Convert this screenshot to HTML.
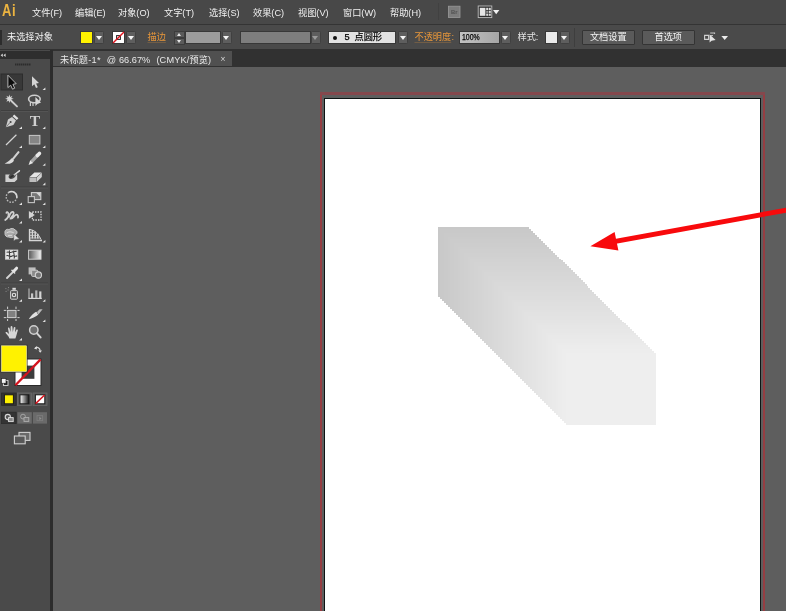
<!DOCTYPE html>
<html lang="zh-CN">
<head>
<meta charset="utf-8">
<title>未标题-1* @ 66.67% (CMYK/预览)</title>
<style>
html,body{margin:0;padding:0;}
body{width:786px;height:611px;overflow:hidden;position:relative;background:#5e5e5e;
  font-family:"Liberation Sans","Noto Sans CJK SC",sans-serif;font-size:9.2px;color:#e4e4e4;}
.abs{position:absolute;}
#menubar{left:0;top:0;width:786px;height:24px;will-change:transform;}
#menubg{left:0;top:0;width:786px;height:24px;background:#484848;}
#menubar .mi{position:absolute;top:0.5px;height:24px;line-height:24px;font-size:9.2px;color:#f0f0f0;white-space:nowrap;}
#ctrl{left:0;top:24px;width:786px;height:26px;border-top:1px solid transparent;box-sizing:border-box;will-change:transform;}
#ctrlbg{left:0;top:24px;width:786px;height:26px;background:#4a4a4a;border-top:1px solid #343434;box-sizing:border-box;}
#ctrl .t{position:absolute;top:0.4px;height:25px;line-height:25px;font-size:9.2px;white-space:nowrap;}
.dd{position:absolute;top:6px;height:13px;width:10px;background:#5e5e5e;border:1px solid #404040;box-sizing:border-box;border-radius:1.5px;}
.dd.dim:after{border-top-color:#9a9a9a;}
.sp{position:absolute;width:10.5px;height:6.5px;background:#5a5a5a;border:1px solid #3c3c3c;box-sizing:border-box;}
.sp:after{content:"";position:absolute;left:1.8px;top:0.6px;border-left:2.5px solid transparent;border-right:2.5px solid transparent;border-bottom:3px solid #e8e8e8;}
.sp.dn:after{border-bottom:none;border-top:3px solid #e8e8e8;top:1px;}
.lnk{text-decoration:underline;text-decoration-thickness:1px;text-decoration-color:rgba(232,151,58,0.25);text-underline-offset:1.5px;}
.dd:after{content:"";position:absolute;left:0.9px;top:3.8px;border-left:3.1px solid transparent;border-right:3.1px solid transparent;border-top:4px solid #f4f4f4;}
.fld{position:absolute;top:6px;height:13px;box-sizing:border-box;border:1px solid #383838;}
.btn{position:absolute;top:5px;height:14.5px;box-sizing:border-box;border:1px solid #343434;background:#5a5a5a;color:#f4f4f4;font-size:9.2px;line-height:12.5px;text-align:center;border-radius:1px;}
#tabbar{left:0;top:49.4px;width:786px;height:17.4px;background:#313131;}
#tabbg{left:53px;top:51px;width:179px;height:15px;background:#505050;}
#tab{left:53px;top:51px;width:179px;height:15px;will-change:transform;font-size:9.2px;line-height:18px;color:#e8e8e8;white-space:nowrap;}
#tools{left:0;top:50px;width:50px;height:561px;background:#4a4a4a;}
#toolsborder{left:49.5px;top:50px;width:3.5px;height:561px;background:#2c2c2c;}
#toolshead{left:0;top:51px;width:50px;height:8px;background:#2e2e2e;}
.tt{position:absolute;top:0;}
.sep{position:absolute;left:2px;width:46px;height:1px;background:#484848;}
</style>
</head>
<body>
<!-- canvas -->
<div class="abs" id="canvas" style="left:53px;top:67px;width:733px;height:544px;background:#5e5e5e;"></div>
<!-- bleed (red) -->
<div class="abs" style="left:320px;top:93px;width:445px;height:530px;border:2px solid #963e43;border-top:none;box-sizing:border-box;"></div>
<div class="abs" style="left:320px;top:92px;width:445px;height:3px;background:#84484d;"></div>
<!-- artboard -->
<div class="abs" style="left:324px;top:98px;width:437px;height:530px;border:1px solid #0e1414;background:#fff;box-sizing:border-box;"></div>
<svg class="abs" style="left:0;top:0" width="786" height="611" viewBox="0 0 786 611">
  <defs>
    <linearGradient id="g1" gradientUnits="userSpaceOnUse" x1="438" y1="227" x2="655" y2="424">
      <stop offset="0" stop-color="#cfcfcf"/><stop offset="1" stop-color="#f0f0f0"/>
    </linearGradient>
  </defs>
  <g shape-rendering="crispEdges">
<rect x="438.40" y="227.00" width="90.60" height="69.60" fill="#c8c8c8"/>
<rect x="440.39" y="228.97" width="90.59" height="69.64" fill="#c9c9c9"/>
<rect x="442.39" y="230.94" width="90.58" height="69.67" fill="#c9c9c9"/>
<rect x="444.38" y="232.91" width="90.57" height="69.71" fill="#cacaca"/>
<rect x="446.38" y="234.88" width="90.56" height="69.74" fill="#cacaca"/>
<rect x="448.37" y="236.84" width="90.55" height="69.78" fill="#cbcbcb"/>
<rect x="450.36" y="238.81" width="90.53" height="69.82" fill="#cccccc"/>
<rect x="452.36" y="240.78" width="90.52" height="69.85" fill="#cccccc"/>
<rect x="454.35" y="242.75" width="90.51" height="69.89" fill="#cdcdcd"/>
<rect x="456.34" y="244.72" width="90.50" height="69.92" fill="#cdcdcd"/>
<rect x="458.34" y="246.69" width="90.49" height="69.96" fill="#cecece"/>
<rect x="460.33" y="248.66" width="90.48" height="70.00" fill="#cfcfcf"/>
<rect x="462.32" y="250.62" width="90.47" height="70.03" fill="#cfcfcf"/>
<rect x="464.32" y="252.59" width="90.46" height="70.07" fill="#d0d0d0"/>
<rect x="466.31" y="254.56" width="90.45" height="70.10" fill="#d0d0d0"/>
<rect x="468.31" y="256.53" width="90.44" height="70.14" fill="#d1d1d1"/>
<rect x="470.30" y="258.50" width="90.42" height="70.17" fill="#d2d2d2"/>
<rect x="472.29" y="260.47" width="90.41" height="70.21" fill="#d2d2d2"/>
<rect x="474.29" y="262.44" width="90.40" height="70.25" fill="#d3d3d3"/>
<rect x="476.28" y="264.41" width="90.39" height="70.28" fill="#d3d3d3"/>
<rect x="478.27" y="266.38" width="90.38" height="70.32" fill="#d4d4d4"/>
<rect x="480.27" y="268.34" width="90.37" height="70.35" fill="#d4d4d4"/>
<rect x="482.26" y="270.31" width="90.36" height="70.39" fill="#d5d5d5"/>
<rect x="484.26" y="272.28" width="90.35" height="70.43" fill="#d6d6d6"/>
<rect x="486.25" y="274.25" width="90.34" height="70.46" fill="#d6d6d6"/>
<rect x="488.24" y="276.22" width="90.33" height="70.50" fill="#d7d7d7"/>
<rect x="490.24" y="278.19" width="90.32" height="70.53" fill="#d7d7d7"/>
<rect x="492.23" y="280.16" width="90.30" height="70.57" fill="#d8d8d8"/>
<rect x="494.22" y="282.12" width="90.29" height="70.61" fill="#d9d9d9"/>
<rect x="496.22" y="284.09" width="90.28" height="70.64" fill="#d9d9d9"/>
<rect x="498.21" y="286.06" width="90.27" height="70.68" fill="#dadada"/>
<rect x="500.21" y="288.03" width="90.26" height="70.71" fill="#dadada"/>
<rect x="502.20" y="290.00" width="90.25" height="70.75" fill="#dbdbdb"/>
<rect x="504.19" y="291.97" width="90.24" height="70.79" fill="#dcdcdc"/>
<rect x="506.19" y="293.94" width="90.23" height="70.82" fill="#dcdcdc"/>
<rect x="508.18" y="295.91" width="90.22" height="70.86" fill="#dddddd"/>
<rect x="510.17" y="297.88" width="90.21" height="70.89" fill="#dddddd"/>
<rect x="512.17" y="299.84" width="90.20" height="70.93" fill="#dedede"/>
<rect x="514.16" y="301.81" width="90.18" height="70.97" fill="#dfdfdf"/>
<rect x="516.16" y="303.78" width="90.17" height="71.00" fill="#dfdfdf"/>
<rect x="518.15" y="305.75" width="90.16" height="71.04" fill="#e0e0e0"/>
<rect x="520.14" y="307.72" width="90.15" height="71.07" fill="#e0e0e0"/>
<rect x="522.14" y="309.69" width="90.14" height="71.11" fill="#e1e1e1"/>
<rect x="524.13" y="311.66" width="90.13" height="71.15" fill="#e2e2e2"/>
<rect x="526.12" y="313.62" width="90.12" height="71.18" fill="#e2e2e2"/>
<rect x="528.12" y="315.59" width="90.11" height="71.22" fill="#e3e3e3"/>
<rect x="530.11" y="317.56" width="90.10" height="71.25" fill="#e3e3e3"/>
<rect x="532.11" y="319.53" width="90.09" height="71.29" fill="#e4e4e4"/>
<rect x="534.10" y="321.50" width="90.08" height="71.33" fill="#e4e4e4"/>
<rect x="536.09" y="323.47" width="90.06" height="71.36" fill="#e5e5e5"/>
<rect x="538.09" y="325.44" width="90.05" height="71.40" fill="#e6e6e6"/>
<rect x="540.08" y="327.41" width="90.04" height="71.43" fill="#e6e6e6"/>
<rect x="542.08" y="329.38" width="90.03" height="71.47" fill="#e7e7e7"/>
<rect x="544.07" y="331.34" width="90.02" height="71.50" fill="#e7e7e7"/>
<rect x="546.06" y="333.31" width="90.01" height="71.54" fill="#e8e8e8"/>
<rect x="548.06" y="335.28" width="90.00" height="71.58" fill="#e9e9e9"/>
<rect x="550.05" y="337.25" width="89.99" height="71.61" fill="#e9e9e9"/>
<rect x="552.04" y="339.22" width="89.98" height="71.65" fill="#eaeaea"/>
<rect x="554.04" y="341.19" width="89.97" height="71.68" fill="#eaeaea"/>
<rect x="556.03" y="343.16" width="89.95" height="71.72" fill="#ebebeb"/>
<rect x="558.02" y="345.12" width="89.94" height="71.76" fill="#ececec"/>
<rect x="560.02" y="347.09" width="89.93" height="71.79" fill="#ececec"/>
<rect x="562.01" y="349.06" width="89.92" height="71.83" fill="#ededed"/>
<rect x="564.01" y="351.03" width="89.91" height="71.86" fill="#ededed"/>
<rect x="566.00" y="353.00" width="89.90" height="71.90" fill="#eeeeee"/>
  </g>
  <polygon points="790,206.9 790,211.9 616,243.8 616,238.8" fill="#f80a0c"/>
  <polygon points="590.4,246.2 614.6,232 618.4,250.6" fill="#f80a0c"/>
</svg>

<div class="abs" id="menubg"></div>
<div class="abs" id="ctrlbg"></div>
<div class="abs" id="menubar">
  <div class="mi" style="left:2px;top:-0.5px;font-weight:bold;font-size:16.6px;color:#ecb440;line-height:22px;transform:scaleX(0.78);transform-origin:0 0;letter-spacing:0.8px;">Ai</div>
  <div class="mi" style="left:32px;">文件(F)</div>
  <div class="mi" style="left:75px;">编辑(E)</div>
  <div class="mi" style="left:118px;">对象(O)</div>
  <div class="mi" style="left:164px;">文字(T)</div>
  <div class="mi" style="left:209px;">选择(S)</div>
  <div class="mi" style="left:253px;">效果(C)</div>
  <div class="mi" style="left:298px;">视图(V)</div>
  <div class="mi" style="left:343px;">窗口(W)</div>
  <div class="mi" style="left:390px;">帮助(H)</div>
  <div class="abs" style="left:438px;top:3px;width:1px;height:17px;background:#414141;"></div>
  <svg class="abs" style="left:446px;top:4px" width="56" height="16" viewBox="446 4 56 16">
    <rect x="448.4" y="6.2" width="11.6" height="11.2" fill="#7c7c7c" stroke="#9a9a9a" stroke-width="0.8"/>
    <text x="454.2" y="14.2" font-family="'Liberation Sans',sans-serif" font-weight="bold" font-size="5.8" fill="#505050" text-anchor="middle">Br</text>
    <rect x="478.2" y="6" width="13.6" height="11.6" fill="#2e2e2e" stroke="#bdbdbd" stroke-width="0.9"/>
    <rect x="479.8" y="7.8" width="5.6" height="8" fill="#e6e6e6"/>
    <rect x="486.2" y="7.8" width="2" height="2.2" fill="#dcdcdc"/><rect x="488.8" y="7.8" width="2" height="2.2" fill="#dcdcdc"/>
    <rect x="486.2" y="10.7" width="2" height="2.2" fill="#9a9a9a"/><rect x="488.8" y="10.7" width="2" height="2.2" fill="#dcdcdc"/>
    <rect x="486.2" y="13.6" width="2" height="2.2" fill="#dcdcdc"/><rect x="488.8" y="13.6" width="2" height="2.2" fill="#dcdcdc"/>
    <path d="M493 10 H499.4 L496.2 14.2 Z" fill="#f0f0f0"/>
  </svg>
</div>

<div class="abs" id="ctrl">
  <div class="abs" style="left:0;top:5px;width:2px;height:14.5px;background:#2c2c2c;"></div>
  <div class="t" style="left:7px;color:#f2f2f2;">未选择对象</div>
  <div class="fld" style="left:80px;width:13px;background:#fff200;border-color:#3a3a3a;"></div>
  <div class="dd" style="left:94px;"></div>
  <div class="fld" style="left:112px;width:13px;background:#fff;"></div>
  <svg class="abs" style="left:112px;top:6px" width="13" height="13" viewBox="0 0 13 13"><rect x="4.6" y="4.6" width="3.8" height="3.8" fill="none" stroke="#222" stroke-width="1"/><line x1="1" y1="12" x2="12" y2="1" stroke="#e0141e" stroke-width="1.5"/></svg>
  <div class="dd" style="left:126px;"></div>
  <div class="t lnk" style="left:147.5px;color:#e8973a;">描边</div>
  <div class="sp" style="left:174px;top:6px;"></div>
  <div class="sp dn" style="left:174px;top:13px;"></div>
  <div class="fld" style="left:185px;width:36px;background:#9c9c9c;"></div>
  <div class="dd" style="left:221.5px;"></div>
  <div class="fld" style="left:239.5px;width:71px;background:#7e7e7e;"></div>
  <div class="dd dim" style="left:310.5px;"></div>
  <div class="fld" style="left:328px;width:68px;background:#e2e2e2;"></div>
  <div class="abs" style="left:333px;top:11px;width:4px;height:4px;border-radius:2px;background:#111;"></div>
  <div class="t" style="left:344.5px;color:#000;-webkit-text-stroke:0.25px #000;">5</div>
  <div class="t" style="left:354.5px;color:#000;-webkit-text-stroke:0.2px #000;">点圆形</div>
  <div class="dd" style="left:398px;"></div>
  <div class="t lnk" style="left:414.5px;color:#e8973a;">不透明度</div>
  <div class="t" style="left:451.5px;color:#e8973a;">:</div>
  <div class="fld" style="left:459px;width:41px;background:linear-gradient(90deg,#c2c2c2,#a6a6a6);"></div>
  <div class="t" style="left:462.4px;top:-0.8px;color:#000;font-size:9.4px;-webkit-text-stroke:0.25px #000;transform:scaleX(0.74);transform-origin:0 50%;">100%</div>
  <div class="dd" style="left:500.6px;"></div>
  <div class="t" style="left:517.5px;">样式:</div>
  <div class="fld" style="left:545px;width:13px;background:#ebebeb;"></div>
  <div class="dd" style="left:559.5px;"></div>
  <div class="abs" style="left:574px;top:3px;width:1px;height:19px;background:#3e3e3e;"></div>
  <div class="btn" style="left:581.5px;width:53.5px;">文档设置</div>
  <div class="btn" style="left:641.5px;width:53.5px;">首选项</div>
  <svg class="abs" style="left:702px;top:4px" width="30" height="18" viewBox="0 0 30 18">
    <path d="M2.6 6.4 H6.6 V10.4 H2.6 Z" fill="none" stroke="#d0d0d0" stroke-width="1.1"/>
    <path d="M8.2 4 H12 M8.2 6.6 H11 M12.6 3.4 V5" stroke="#c8c8c8" stroke-width="1"/>
    <path d="M7.6 5.6 V13.6 L9.6 11.8 L13.6 11 Z" fill="#e4e4e4"/>
    <path d="M19.4 7 H26 L22.7 11 Z" fill="#ececec"/>
  </svg>
</div>

<div class="abs" id="tabbar"></div>
<div class="abs" id="tabbg"></div>
<div class="abs" id="tab"><span class="tt" style="left:7px;letter-spacing:0.25px;">未标题-1*</span><span class="tt" style="left:53.8px;">@</span><span class="tt" style="left:66px;">66.67%</span><span class="tt" style="left:103.4px;letter-spacing:0.15px;">(CMYK/预览)</span><span style="position:absolute;left:167.6px;top:-0.6px;font-size:8.4px;color:#dcdcdc;">×</span></div>

<div class="abs" id="tools"></div>
<div class="abs" id="toolsborder"></div>
<div class="abs" id="toolshead"></div>
<svg class="abs" id="toolsvg" style="left:0;top:0;will-change:transform;filter:blur(0.3px)" width="53" height="611" viewBox="0 0 53 611">
  <defs>
    <linearGradient id="tg1" x1="0" y1="0" x2="1" y2="0"><stop offset="0" stop-color="#555"/><stop offset="1" stop-color="#f4f4f4"/></linearGradient>
    <linearGradient id="tg2" x1="0" y1="0" x2="1" y2="0"><stop offset="0" stop-color="#fff"/><stop offset="1" stop-color="#111"/></linearGradient>
  </defs>
  <!-- header arrows -->
  <path d="M0.6 55.2 L2.8 53.4 V57Z M3.4 55.2 L5.6 53.4 V57Z" fill="#d4d4d4"/>
  <!-- gripper -->
  <line x1="15" y1="64.5" x2="31" y2="64.5" stroke="#2c2c2c" stroke-width="2" stroke-dasharray="1.5 0.5"/>
  <!-- separators -->
  <g stroke="#3f3f3f" stroke-width="1">
    <line x1="1" y1="110.5" x2="48" y2="110.5"/><line x1="1" y1="187" x2="48" y2="187"/><line x1="1" y1="283" x2="48" y2="283"/>
  </g>
  <g stroke="#545454" stroke-width="1">
    <line x1="1" y1="111.5" x2="48" y2="111.5"/><line x1="1" y1="188" x2="48" y2="188"/><line x1="1" y1="284" x2="48" y2="284"/>
  </g>
  <!-- selection highlight -->
  <rect x="1" y="74" width="21.5" height="16" fill="#383838" stroke="#2c2c2c" stroke-width="1"/>
  <!-- selection tool (black arrow white outline) -->
  <path d="M7.9 75.2 V87.6 L10.7 85.2 L12.5 89.2 L14.7 88.2 L12.9 84.3 L16.2 83.7 Z" fill="#0c0c0c" stroke="#c4c4c4" stroke-width="0.9" stroke-linejoin="round"/>
  <!-- direct selection -->
  <path d="M32 76.3 V86.2 L34.3 84.2 L36 88 L37.8 87.2 L36.1 83.4 L39 83 Z" fill="#d4d4d4"/>
  <!-- flyout triangles -->
  <g fill="#e2e2e2">
    <path d="M45.4 87.6 V90 H42.6Z"/>
    <path d="M22 126.4 V129 H19Z"/><path d="M45.4 126.4 V129 H42.6Z"/>
    <path d="M22 145.4 V148 H19Z"/><path d="M45.4 145.4 V148 H42.6Z"/>
    <path d="M45.4 163.2 V165.8 H42.6Z"/>
    <path d="M45.4 182.6 V185.2 H42.6Z"/>
    <path d="M22 202.4 V205 H19Z"/><path d="M45.4 202.4 V205 H42.6Z"/>
    <path d="M22 221 V223.6 H19Z"/>
    <path d="M22 240 V242.6 H19Z"/><path d="M45.4 240 V242.6 H42.6Z"/>
    <path d="M22 278.4 V281 H19Z"/>
    <path d="M22 299.2 V301.8 H19Z"/><path d="M45.4 299.2 V301.8 H42.6Z"/>
    <path d="M45.4 319.4 V322 H42.6Z"/>
    <path d="M22 338 V340.6 H19Z"/>
  </g>
  <!-- magic wand -->
  <line x1="11.4" y1="101" x2="17" y2="106.4" stroke="#cdcdcd" stroke-width="1.9" stroke-linecap="round"/>
  <polygon points="9.40,94.50 10.17,96.95 12.44,95.76 11.25,98.03 13.70,98.80 11.25,99.57 12.44,101.84 10.17,100.65 9.40,103.10 8.63,100.65 6.36,101.84 7.55,99.57 5.10,98.80 7.55,98.03 6.36,95.76 8.63,96.95" fill="#d4d4d4"/>
  <!-- lasso -->
  <ellipse cx="34.4" cy="99" rx="5.8" ry="3.8" fill="none" stroke="#cfcfcf" stroke-width="1.6"/>
  <path d="M30.4 102 V106 M33 102.6 V106" stroke="#cfcfcf" stroke-width="1.2"/>
  <path d="M35.4 97 V106 L37.4 104 L41 102.6 Z" fill="#d8d8d8"/>
  <!-- pen -->
  <g>
    <path d="M14.2 114.4 L18.4 118.2 L16.8 120 L12.6 116.2 Z" fill="#e0e0e0"/>
    <path d="M12 117 L16 120.6 L13.4 125 L5.8 127.2 L8 119.6 Z" fill="#cfcfcf"/>
    <circle cx="10.6" cy="122" r="1" fill="#444"/>
    <line x1="6.4" y1="126.6" x2="10" y2="122.6" stroke="#555" stroke-width="0.7"/>
  </g>
  <!-- T -->
  <text x="35" y="126.2" font-family="'Liberation Serif',serif" font-size="15.5" font-weight="bold" fill="#cfcfcf" text-anchor="middle">T</text>
  <!-- line -->
  <line x1="6" y1="145" x2="16.4" y2="134.8" stroke="#d4d4d4" stroke-width="1.2"/>
  <!-- rect -->
  <rect x="29.3" y="135.4" width="10.6" height="8.6" fill="#858585" stroke="#c8c8c8" stroke-width="1"/>
  <!-- brush -->
  <line x1="18.5" y1="152.2" x2="12.8" y2="159.2" stroke="#d2d2d2" stroke-width="2.1" stroke-linecap="round"/>
  <path d="M11.6 158.2 L14 160.4 C12.6 163.4 8.4 164.6 4.6 163.4 C7.6 162.4 9.4 160.6 11.6 158.2Z" fill="#dadada"/>
  <!-- pencil -->
  <g>
    <line x1="38.2" y1="154.6" x2="31.6" y2="161.6" stroke="#a6a6a6" stroke-width="3.5"/>
    <line x1="39.4" y1="153.4" x2="37.4" y2="155.5" stroke="#e8e8e8" stroke-width="3.6" stroke-linecap="round"/>
    <path d="M30.2 160.2 L33.2 163 L28.6 165 Z" fill="#e6e6e6"/>
  </g>
  <!-- blob brush -->
  <g>
    <path d="M5.4 174.6 H10 C8 176 8 178.6 11 179 C14 179 15.6 177 16 174.6 H17.2 V179.4 L14.6 182 H5.4 Z" fill="#cfcfcf"/>
    <line x1="19.4" y1="170.8" x2="14" y2="175" stroke="#dcdcdc" stroke-width="1.5" stroke-linecap="round"/>
    <path d="M14.6 174.4 C13 177.4 10.4 178 9.4 177.6 C10.6 175.6 12.6 174.8 14.6 174.4Z" fill="#2c2c2c"/>
  </g>
  <!-- eraser -->
  <g>
    <path d="M34.4 172.4 H41.6 L36.6 177 H29.6 Z" fill="#e4e4e4"/>
    <path d="M29.4 177.4 H36.6 V182 H29.4 Z" fill="#bdbdbd"/>
    <path d="M37 177.2 L41.8 172.8 V177 L37 181.8 Z" fill="#d2d2d2"/>
  </g>
  <!-- rotate -->
  <circle cx="11.5" cy="197" r="5.3" fill="none" stroke="#bcbcbc" stroke-width="1.3" stroke-dasharray="1.6 1.3"/>
  <path d="M8.6 192.4 A5.4 5.4 0 0 1 16.8 197.8" fill="none" stroke="#d8d8d8" stroke-width="1.5"/>
  <!-- scale -->
  <rect x="31.4" y="192.6" width="9.4" height="7" fill="#777" stroke="#d0d0d0" stroke-width="1.1"/>
  <path d="M36.4 193 H40.4 V197 Z" fill="#d8d8d8"/>
  <rect x="28.2" y="196.6" width="6.2" height="6" fill="#4a4a4a" stroke="#c4c4c4" stroke-width="1.1"/>
  <!-- warp -->
  <path d="M5.2 220 C8 218 9 216 8.4 213.6 C8 211.6 6.6 211.6 6.4 212.8 M9 217 C10 213 12.6 210.4 13.6 212.6 C14.4 214.6 11.6 216.6 10.6 218.6 C13 219 14 215.6 16 214.8 C17.6 214.4 18.4 216 18 217.6" fill="none" stroke="#d0d0d0" stroke-width="1.7" stroke-linecap="round"/>
  <!-- free transform -->
  <rect x="32.4" y="212" width="8.6" height="8" fill="#484848" stroke="#dcdcdc" stroke-width="1.3" stroke-dasharray="1.4 1.2"/>
  <path d="M28.9 211 V218.8 L34.8 215 Z" fill="#d4d4d4"/>
  <!-- shape builder -->
  <path d="M5 233 C4.4 230 7 228.6 9 229.6 C10.6 228 14 228 15 230 C17.4 230.6 17.8 233.6 15.6 234.6 C15 237.4 11 238.4 9 237 C6.4 237.4 4.6 235.4 5 233Z" fill="#a8a8a8" stroke="#cfcfcf" stroke-width="0.9"/>
  <path d="M6.6 233 C8 231.4 12 231.4 14 233.2 M8 235.4 H12" stroke="#e4e4e4" stroke-width="0.8" fill="none"/>
  <path d="M13.8 233.8 V241 L15.6 239.4 L19.4 239 Z" fill="#dedede" stroke="#505050" stroke-width="0.4"/>
  <!-- perspective grid -->
  <g stroke="#d6d6d6" fill="none">
    <path d="M29.6 229 V240.4 H42" stroke-width="1.5"/>
    <path d="M29.6 229.4 C34 230 38 233 41 239.6" stroke-width="1"/>
    <path d="M32.4 230 V238.4 M35.2 231.4 V238.4 M37.8 233.8 V238.4" stroke-width="1.5"/>
    <path d="M29.6 232.4 H35.4 M29.6 235.4 H38.6 M29.6 238 H40.4" stroke-width="0.8"/>
  </g>
  <!-- mesh -->
  <rect x="5.4" y="250" width="12.4" height="9.2" fill="#e4e4e4" stroke="#d0d0d0" stroke-width="0.8"/>
  <path d="M6.6 252.4 C8.6 250.6 10 254 12 252 C13.4 250.8 15 252 16.6 251 M6.4 256 C8.4 254 9.6 258 12 256 C13.6 254.6 15.4 257.6 17 255.6 M9.6 250.6 C8.4 253 11 256 9.4 258.8 M14 250.6 C12.6 253.4 15.6 255.4 14 258.6" stroke="#3a3a3a" stroke-width="1.05" fill="none"/>
  <!-- gradient -->
  <rect x="28.6" y="250.2" width="12.4" height="9" fill="url(#tg1)" stroke="#cfcfcf" stroke-width="1"/>
  <!-- eyedropper -->
  <g>
    <line x1="13.4" y1="271.6" x2="7" y2="278" stroke="#d4d4d4" stroke-width="1.9" stroke-linecap="round"/>
    <line x1="12" y1="270.4" x2="14.6" y2="273" stroke="#dcdcdc" stroke-width="1.6" stroke-linecap="round"/>
    <line x1="14" y1="271" x2="16.6" y2="268.2" stroke="#e4e4e4" stroke-width="3" stroke-linecap="round"/>
  </g>
  <!-- blend -->
  <rect x="28.6" y="267.4" width="7" height="7" fill="#bdbdbd"/>
  <rect x="31.6" y="270.2" width="6.2" height="6.2" rx="1" fill="#8a8a8a" stroke="#cdcdcd" stroke-width="1"/>
  <circle cx="38.4" cy="275" r="3.1" fill="#777" stroke="#d4d4d4" stroke-width="1.1"/>
  <!-- symbol sprayer -->
  <rect x="10.6" y="290.6" width="6.8" height="8.6" rx="0.8" fill="#555" stroke="#d2d2d2" stroke-width="1"/>
  <rect x="12.4" y="287.8" width="3.4" height="2" fill="#dcdcdc"/>
  <circle cx="14" cy="295" r="1.7" fill="none" stroke="#e2e2e2" stroke-width="1.1"/>
  <path d="M5.4 288.6 H6.4 M7.6 290 H8.6 M5.6 291.4 H6.6 M8 287.6 H9" stroke="#8a8a8a" stroke-width="1"/>
  <!-- graph -->
  <g>
    <line x1="29" y1="288.4" x2="29" y2="298.6" stroke="#bdbdbd" stroke-width="1.1"/>
    <line x1="28.4" y1="298.4" x2="41.8" y2="298.4" stroke="#d8d8d8" stroke-width="1.2"/>
    <rect x="31" y="293.4" width="2.2" height="4.6" fill="#c8c8c8"/>
    <rect x="35.2" y="290.4" width="2.2" height="7.6" fill="#b4b4b4"/>
    <rect x="39.2" y="291.4" width="2.2" height="6.6" fill="#d4d4d4"/>
  </g>
  <!-- artboard tool -->
  <rect x="7.6" y="310.4" width="8.4" height="7.2" fill="#808080" stroke="#d0d0d0" stroke-width="1"/>
  <path d="M7.6 306.6 V309 M16 306.6 V309 M7.6 319 V321 M16 319 V321 M3.8 310.4 H6.4 M17.4 310.4 H19.6 M3.8 317.6 H6.4 M17.4 317.6 H19.6" stroke="#cfcfcf" stroke-width="1"/>
  <!-- slice -->
  <path d="M28.8 319.2 C31.6 314.6 34.6 312.4 36.4 311.8 L38.2 314.8 C35.4 316.8 32 318.6 28.8 319.2Z" fill="#e0e0e0"/>
  <path d="M37 312 L39.6 309.2 H42.6 L38.4 314.4 Z" fill="#b8b8b8"/>
  <!-- hand -->
  <path d="M9.4 338.4 C8.6 336 7 334.6 5.6 333 C5.2 332 6.4 331.4 7.4 332.4 L9 334 L8 328.6 C7.8 327.4 9.4 327.2 9.6 328.4 L10.6 332 L10.6 327 C10.6 325.8 12.4 325.8 12.4 327 L12.8 332 L13.8 327.6 C14 326.6 15.6 326.8 15.4 328 L15 332.6 L16.4 329.8 C16.8 329 18.2 329.4 17.8 330.6 C17 333 16.4 336 15.4 338.4 Z" fill="#d6d6d6"/>
  <!-- zoom -->
  <circle cx="33.8" cy="330" r="4.2" fill="#6e6e6e" stroke="#cfcfcf" stroke-width="1.5"/>
  <line x1="37" y1="333.4" x2="40.6" y2="337.4" stroke="#d4d4d4" stroke-width="2" stroke-linecap="round"/>
  <!-- fill / stroke -->
  <rect x="14.5" y="358.5" width="27" height="27.5" fill="#2a2a2a"/>
  <rect x="15.5" y="359.5" width="25" height="25.5" fill="#fff"/>
  <rect x="21.6" y="365.6" width="12.8" height="13.2" fill="#3c3c3c"/>
  <line x1="15.4" y1="385.2" x2="40.6" y2="359.4" stroke="#d4141e" stroke-width="2.3"/>
  <rect x="0.5" y="344.8" width="27" height="27.6" fill="#2a2a2a"/>
  <rect x="1.5" y="345.8" width="25" height="25.6" fill="#fff200" stroke="#fffbb0" stroke-width="0.6"/>
  <!-- swap -->
  <path d="M35.4 348.6 C36.6 346.8 39.6 347 40.2 350.6" fill="none" stroke="#d6d6d6" stroke-width="1.3"/>
  <path d="M34 348.4 L36.8 346 V349.6 Z M38.4 350.4 H42 L40.2 352.8 Z" fill="#e0e0e0"/>
  <!-- default -->
  <rect x="3.4" y="380.6" width="4.6" height="4.8" fill="#1e1e1e" stroke="#e8e8e8" stroke-width="0.9"/>
  <rect x="1.6" y="378.6" width="4.4" height="4.6" fill="#f4f4f4" stroke="#222" stroke-width="0.6"/>
  <!-- color / gradient / none -->
  <rect x="1.6" y="393" width="14.6" height="12.4" fill="#333" stroke="#2a2a2a" stroke-width="0.8"/>
  <rect x="4.4" y="394.8" width="9" height="9" fill="#fff200" stroke="#1a1a1a" stroke-width="1"/>
  <rect x="17.4" y="393" width="14" height="12.4" fill="#585858" stroke="#6a6a6a" stroke-width="0.8"/>
  <rect x="20" y="394.8" width="9" height="9" fill="url(#tg2)" stroke="#1a1a1a" stroke-width="1"/>
  <rect x="33" y="393" width="14" height="12.4" fill="#585858" stroke="#6a6a6a" stroke-width="0.8"/>
  <rect x="35.4" y="394.8" width="9.4" height="9" fill="#fff" stroke="#1a1a1a" stroke-width="1"/>
  <line x1="35.6" y1="403.6" x2="44.6" y2="395" stroke="#d8141e" stroke-width="1.5"/>
  <!-- draw modes -->
  <rect x="1.4" y="412.2" width="14.8" height="11.4" fill="#343434" stroke="#2c2c2c" stroke-width="0.8"/>
  <rect x="17.4" y="412.2" width="14.4" height="11.4" fill="#6a6a6a"/>
  <rect x="33" y="412.2" width="14" height="11.4" fill="#6a6a6a"/>
  <circle cx="7.8" cy="417" r="2.6" fill="#555" stroke="#d8d8d8" stroke-width="1.1"/>
  <rect x="8.6" y="417.6" width="4.6" height="4" fill="#888" stroke="#e0e0e0" stroke-width="0.9"/>
  <circle cx="23" cy="416.6" r="2.4" fill="none" stroke="#a4a4a4" stroke-width="1"/>
  <rect x="24" y="417.6" width="4.8" height="3.8" fill="#777" stroke="#b0b0b0" stroke-width="0.9"/>
  <rect x="37" y="415.6" width="5.6" height="5" fill="none" stroke="#7c7c7c" stroke-width="0.9"/>
  <path d="M39.4 416.8 V420 L41.6 418.4Z" fill="#909090"/>
  <!-- screen mode -->
  <rect x="19" y="432.4" width="11" height="8" fill="#6a6a6a" stroke="#d0d0d0" stroke-width="1.1"/>
  <rect x="14.4" y="436" width="10.8" height="7.8" fill="#585858" stroke="#d0d0d0" stroke-width="1.1"/>
</svg>
</body>
</html>
